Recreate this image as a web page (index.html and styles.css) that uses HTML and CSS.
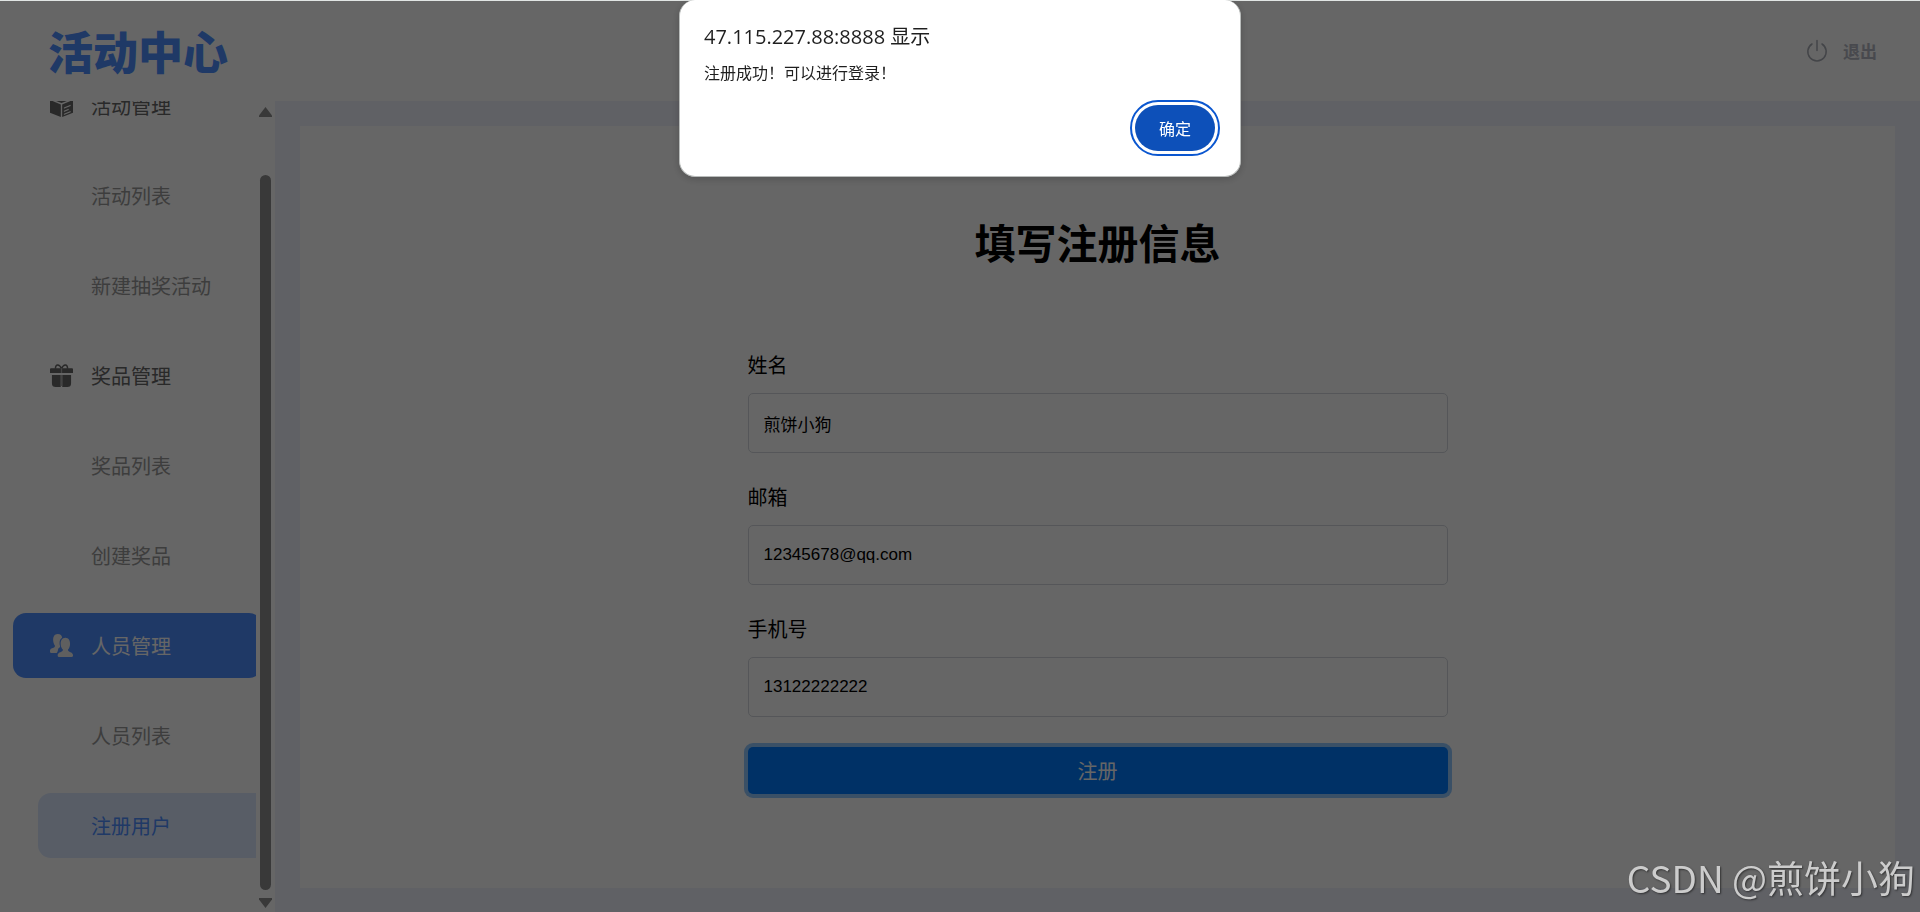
FILE: index.html
```
<!DOCTYPE html>
<html lang="zh-CN">
<head>
    <meta charset="UTF-8">
    <meta name="viewport" content="width=device-width, initial-scale=1.0">
    <title>活动中心</title>
    <link rel="stylesheet" href="styles.css">
</head>
<body>
    <!-- Header -->
    <header class="header">
        <div class="logo">活动中心</div>
        <a href="#" class="logout">
            <svg width="22" height="24" viewBox="0 0 22 24" fill="none" stroke="currentColor" stroke-width="1.5" stroke-linecap="round">
                <path d="M11 1.500v10M6 5a9.200 9.200 0 1 0 10 0"/>
            </svg>
            <span>退出</span>
        </a>
    </header>

    <div class="container">
        <!-- Sidebar -->
        <aside class="sidebar">
            <nav class="menu">
                <a href="#" class="menu-item">
                    <svg class="icon" viewBox="0 0 24 24" fill="currentColor">
                        <path d="M12 0 23.500 5 12 9.500.500 5z"/>
                        <path d="M0 6.200 11.300 11v13L0 19.500z"/>
                        <path fill-rule="evenodd" d="M12.700 11 24 6.200v13.300L12.700 24zM14.500 14.200v1.300l7-3v-1.300zm0 3.300v1.300l5-2v-1.300zm0 3.200v1.300l7-3v-1.300z"/>
                    </svg>
                    <span>活动管理</span>
                </a>
                <a href="#" class="menu-item sub">活动列表</a>
                <a href="#" class="menu-item sub">新建抽奖活动</a>
                <a href="#" class="menu-item">
                    <svg class="icon" viewBox="0 0 24 24" fill="currentColor">
                        <path d="M1 4.500h22q1 0 1 .500v4.500H0V5q0-.500 1-.500z"/>
                        <path d="M2 11.500h9.200V24H6q-4 0-4-4zM12.800 11.500H22V20q0 4-4 4h-5.200z"/>
                        <path d="M12 5C10 0 5.500-.500 5.700 5M12 5c2-5 6.500-5.500 6.300 0" fill="none" stroke="currentColor" stroke-width="1.600"/>
                        <path class="ribbon" d="M11.300 4.500h1.400v5h-1.400zM11.200 11.500h1.600V23h-1.600z"/>
                    </svg>
                    <span>奖品管理</span>
                </a>
                <a href="#" class="menu-item sub">奖品列表</a>
                <a href="#" class="menu-item sub">创建奖品</a>
                <a href="#" class="menu-item active">
                    <svg class="icon" viewBox="0 0 24 24" fill="currentColor">
                        <path d="M8 0c3 0 4.600 1.500 4.600 4C10 5.500 9.300 9 10.600 13c-.300 1.500-1.800 1.500-2.100 2.600-.200 1.700-.600 3.400-1.500 4.100H1.500C-.500 19.700-.500 16.500 1 15.500c1.500-1 4.200-1.100 4.200-3.300C2.500 9 2 0 8 0z"/>
                        <path d="M16 4c6 0 6 9 2.800 12.300-.400 3 4.900 1.700 5.200 5.700q.200 2-1.500 2h-13Q7.800 24 8 22c.500-4 5.800-2.700 5.400-5.700C10 13 10 4 16 4z"/>
                    </svg>
                    <span>人员管理</span>
                </a>
                <a href="#" class="menu-item sub">人员列表</a>
                <a href="#" class="menu-item sub current">注册用户</a>
            </nav>
            <div class="scrollbar">
                <svg width="13" height="10" viewBox="0 0 13 10"><path d="M6.500 0 13 8.500V10H0V8.500z"/></svg>
                <div class="thumb"></div>
                <svg width="13" height="10" viewBox="0 0 13 10"><path d="M6.500 10 0 1.500V0h13v1.500z"/></svg>
            </div>
        </aside>

        <!-- Register form -->
        <main class="content">
            <div class="panel">
                <form class="register-form">
                    <h1>填写注册信息</h1>
                    <div class="form-group">
                        <label for="name">姓名</label>
                        <input type="text" id="name" value="煎饼小狗">
                    </div>
                    <div class="form-group">
                        <label for="mail">邮箱</label>
                        <input type="text" id="mail" value="12345678@qq.com">
                    </div>
                    <div class="form-group">
                        <label for="phone">手机号</label>
                        <input type="text" id="phone" value="13122222222">
                    </div>
                    <button type="button" class="btn-register">注册</button>
                </form>
            </div>
        </main>
    </div>

    <!-- Alert -->
    <div class="overlay">
        <div class="alert" role="alertdialog" aria-labelledby="alertTitle" aria-describedby="alertText">
            <h2 id="alertTitle">47.115.227.88:8888 显示</h2>
            <p id="alertText">注册成功！可以进行登录！</p>
            <button type="button" class="btn-ok">确定</button>
        </div>
    </div>

    <div class="watermark">CSDN @煎饼小狗</div>
</body>
</html>
```

FILE: styles.css
```
/* General Styles */
* {
    margin: 0;
    padding: 0;
    box-sizing: border-box;
}

body {
    display: flex;
    flex-direction: column;
    height: 100vh;
    padding-top: 1px;
    overflow: hidden;
    background-color: #fff;
    color: #000;
    font-family: "Noto Sans CJK SC", sans-serif;
    font-size: 20px;
    line-height: 30px;
}

a {
    text-decoration: none;
}

button {
    border: none;
    cursor: pointer;
    font-family: inherit;
}

/* Header */
.header {
    display: flex;
    flex: none;
    justify-content: space-between;
    align-items: center;
    height: 100px;
    padding: 0 43px 0 48px;
}

.logo {
    color: #4e8eff;
    font-size: 45px;
    font-weight: 900;
    line-height: 60px;
}

.logout {
    display: flex;
    align-items: center;
    gap: 15px;
    color: #b4b7c2;
    font-size: 17px;
    font-weight: bold;
}

.logout svg {
    stroke: #a9acb5;
}

.container {
    display: flex;
    flex: 1;
    min-height: 0;
}

/* Sidebar */
.sidebar {
    display: flex;
    flex: none;
    width: 275px;
}

.menu {
    display: flex;
    flex: 1;
    flex-direction: column;
    justify-content: flex-end;
    gap: 25px;
    padding: 0 0 54px 13px;
    overflow: hidden;
}

.menu-item {
    display: flex;
    flex: none;
    align-items: center;
    gap: 18px;
    width: 249px;
    height: 65px;
    padding-left: 37px;
    border-radius: 13px;
    color: #666;
}

.menu-item.sub {
    margin-left: 25px;
    padding-left: 53px;
    color: #999;
}

.menu-item.active {
    background-color: #4e8eff;
    color: #fff;
}

.menu-item.active .icon {
    color: #eee;
}

.menu-item.current {
    background-color: #dce8ff;
    color: #4e8eff;
}

.icon {
    width: 23px;
    height: 23px;
}

.icon .ribbon {
    fill: #aaa;
}

.scrollbar {
    display: flex;
    flex-direction: column;
    align-items: center;
    justify-content: space-between;
    width: 19px;
    padding: 6px 0 4px;
    fill: #8e8e8e;
}

.scrollbar .thumb {
    flex: 1;
    width: 11px;
    margin: 58px 0 8px;
    border-radius: 6px;
    background-color: #8e8e8e;
}

/* Content */
.content {
    display: flex;
    flex: 1;
    padding: 25px 25px 24px;
    background-color: #f0f2fc;
}

.panel {
    flex: 1;
    padding-top: 85px;
    background-color: #fff;
}

.register-form {
    max-width: 700px;
    margin: 0 auto;
}

.register-form h1 {
    margin-bottom: 79px;
    font-size: 41px;
    font-weight: bold;
    line-height: 60px;
    text-align: center;
}

.form-group {
    margin-bottom: 29px;
}

.form-group label {
    display: block;
    margin-bottom: 13px;
}

.form-group input {
    display: block;
    width: 100%;
    height: 60px;
    padding: 0 15px;
    border: 1px solid #d4d7de;
    border-radius: 5px;
    outline: none;
    font-family: "Liberation Sans", "Noto Sans CJK SC", sans-serif;
    font-size: 17px;
}

.btn-register {
    display: block;
    width: 100%;
    height: 47px;
    margin-top: 30px;
    border-radius: 5px;
    background-color: #007bff;
    box-shadow: 0 0 0 4px rgba(38, 143, 255, 0.5);
    color: #fff;
    font-size: 20px;
}

/* Alert */
.overlay {
    position: fixed;
    inset: 0;
    border-top: 1px solid #e1e5e4;
    background-color: rgba(0, 0, 0, 0.6);
}

.alert {
    position: absolute;
    top: -1px;
    left: 50%;
    display: flex;
    flex-direction: column;
    width: 562px;
    padding: 22px 25px 25px 24px;
    border: 1px solid #b9bcbb;
    border-top: none;
    border-radius: 16px;
    background-color: #fff;
    box-shadow: 0 2px 8px rgba(0, 0, 0, 0.2);
    color: #1f1f1f;
    font-family: "Open Sans", "Noto Sans CJK SC", sans-serif;
    transform: translateX(-50%);
}

.alert h2 {
    font-size: 20px;
    font-weight: normal;
    line-height: 30px;
}

.alert p {
    margin-top: 9px;
    font-size: 16px;
    line-height: 24px;
}

.btn-ok {
    align-self: flex-end;
    width: 80px;
    height: 46px;
    margin-top: 20px;
    border-radius: 23px;
    outline: 2px solid #0b57d0;
    outline-offset: 3px;
    background-color: #0d50b9;
    color: #fff;
    font-size: 16px;
}

.watermark {
    position: fixed;
    right: 5px;
    bottom: 15px;
    color: #ccc;
    font-size: 37px;
    line-height: 40px;
    text-shadow: 1px 1px 2px rgba(0, 0, 0, 0.5);
}
```
